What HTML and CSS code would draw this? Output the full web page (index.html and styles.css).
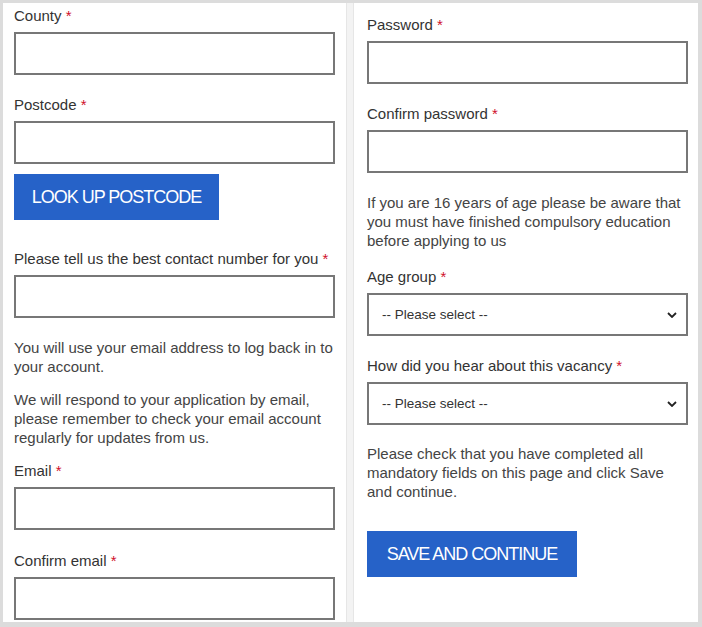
FILE: index.html
```html
<!DOCTYPE html>
<html lang="en">
<head>
<meta charset="utf-8">
<title>Application form</title>
<link rel="stylesheet" href="styles.css">
</head>
<body>
<div class="frame">
  <section class="panel panel-left">
    <div class="field">
      <label class="label">County <span class="req">*</span></label>
      <input class="input" type="text">
    </div>
    <div class="field field-tight">
      <label class="label">Postcode <span class="req">*</span></label>
      <input class="input" type="text">
    </div>
    <button class="btn btn-lookup" type="button">LOOK UP POSTCODE</button>
    <div class="field">
      <label class="label">Please tell us the best contact number for you <span class="req">*</span></label>
      <input class="input" type="text">
    </div>
    <p class="note">You will use your email address to log back in to your account.</p>
    <p class="note">We will respond to your application by email, please remember to check your email account regularly for updates from us.</p>
    <div class="field field-email">
      <label class="label">Email <span class="req">*</span></label>
      <input class="input" type="text">
    </div>
    <div class="field">
      <label class="label">Confirm email <span class="req">*</span></label>
      <input class="input" type="text">
    </div>
  </section>
  <div class="divider"></div>
  <section class="panel panel-right">
    <div class="field">
      <label class="label">Password <span class="req">*</span></label>
      <input class="input" type="password">
    </div>
    <div class="field">
      <label class="label">Confirm password <span class="req">*</span></label>
      <input class="input" type="password">
    </div>
    <p class="note note-right">If you are 16 years of age please be aware that you must have finished compulsory education before applying to us</p>
    <div class="field">
      <label class="label">Age group <span class="req">*</span></label>
      <div class="select-wrap">
        <select class="select"><option>-- Please select --</option></select>
        <svg class="chevron" viewBox="0 0 10 6" width="10" height="6"><path d="M1 1 L5 5 L9 1" fill="none" stroke="#222" stroke-width="1.8"/></svg>
      </div>
    </div>
    <div class="field">
      <label class="label">How did you hear about this vacancy <span class="req">*</span></label>
      <div class="select-wrap">
        <select class="select"><option>-- Please select --</option></select>
        <svg class="chevron" viewBox="0 0 10 6" width="10" height="6"><path d="M1 1 L5 5 L9 1" fill="none" stroke="#222" stroke-width="1.8"/></svg>
      </div>
    </div>
    <p class="note note-right note-last">Please check that you have completed all mandatory fields on this page and click Save and continue.</p>
    <button class="btn btn-save" type="button">SAVE AND CONTINUE</button>
  </section>
</div>
</body>
</html>
```
FILE: styles.css
```css
html, body {
  margin: 0;
  padding: 0;
  background: #ffffff;
}
body {
  font-family: "Liberation Sans", Arial, sans-serif;
  color: #333;
}
.frame {
  box-sizing: border-box;
  width: 702px;
  height: 627px;
  border-top: 3px solid #dcdcdc;
  border-left: 3px solid #dcdcdc;
  border-right: 4px solid #dcdcdc;
  border-bottom: 5px solid #dcdcdc;
  display: flex;
  overflow: hidden;
  background: #fff;
}
.panel {
  box-sizing: border-box;
  background: #fff;
  overflow: hidden;
}
.panel-left {
  width: 343px;
  padding: 3px 10px 0 11px;
}
.divider {
  width: 6px;
  flex: none;
  background: #f3f3f3;
  border-left: 1px solid #e6e6e6;
  border-right: 1px solid #e6e6e6;
}
.panel-right {
  flex: 1;
  padding: 12px 8px 0 13px;
}
.field {
  margin-bottom: 20px;
}
.field-tight {
  margin-bottom: 10px;
}
.field-email {
  margin-bottom: 21px;
}
.label {
  display: block;
  font-size: 15px;
  line-height: 20px;
  color: #333;
  margin-bottom: 6px;
  white-space: nowrap;
}
.req {
  color: #d0112b;
}
.input, .select {
  display: block;
  box-sizing: border-box;
  width: 321px;
  height: 43px;
  margin: 0;
  border: 2px solid #777;
  background: #fff;
  border-radius: 0;
  font-family: inherit;
  font-size: 13.5px;
  color: #333;
}
.select-wrap {
  position: relative;
  width: 321px;
}
.select {
  appearance: none;
  -webkit-appearance: none;
  padding: 0 30px 0 13px;
  outline: none;
}
.chevron {
  position: absolute;
  right: 11px;
  top: 19px;
  pointer-events: none;
}
.note {
  margin: 0 0 14px;
  font-size: 15px;
  line-height: 19px;
  color: #444;
}
.note-right {
  margin-bottom: 17px;
}
.note-last {
  margin-top: -1px;
  margin-bottom: 0;
}
.btn {
  display: block;
  box-sizing: border-box;
  height: 46px;
  border: none;
  background: #2662c8;
  color: #fff;
  font-family: "Liberation Sans", Arial, sans-serif;
  font-size: 18px;
  letter-spacing: -1px;
  white-space: nowrap;
  text-align: center;
  padding: 0;
  margin: 0;
  cursor: pointer;
}
.btn-lookup {
  width: 205px;
  margin-bottom: 29px;
}
.btn-save {
  width: 210px;
  margin-top: 30px;
}
```
